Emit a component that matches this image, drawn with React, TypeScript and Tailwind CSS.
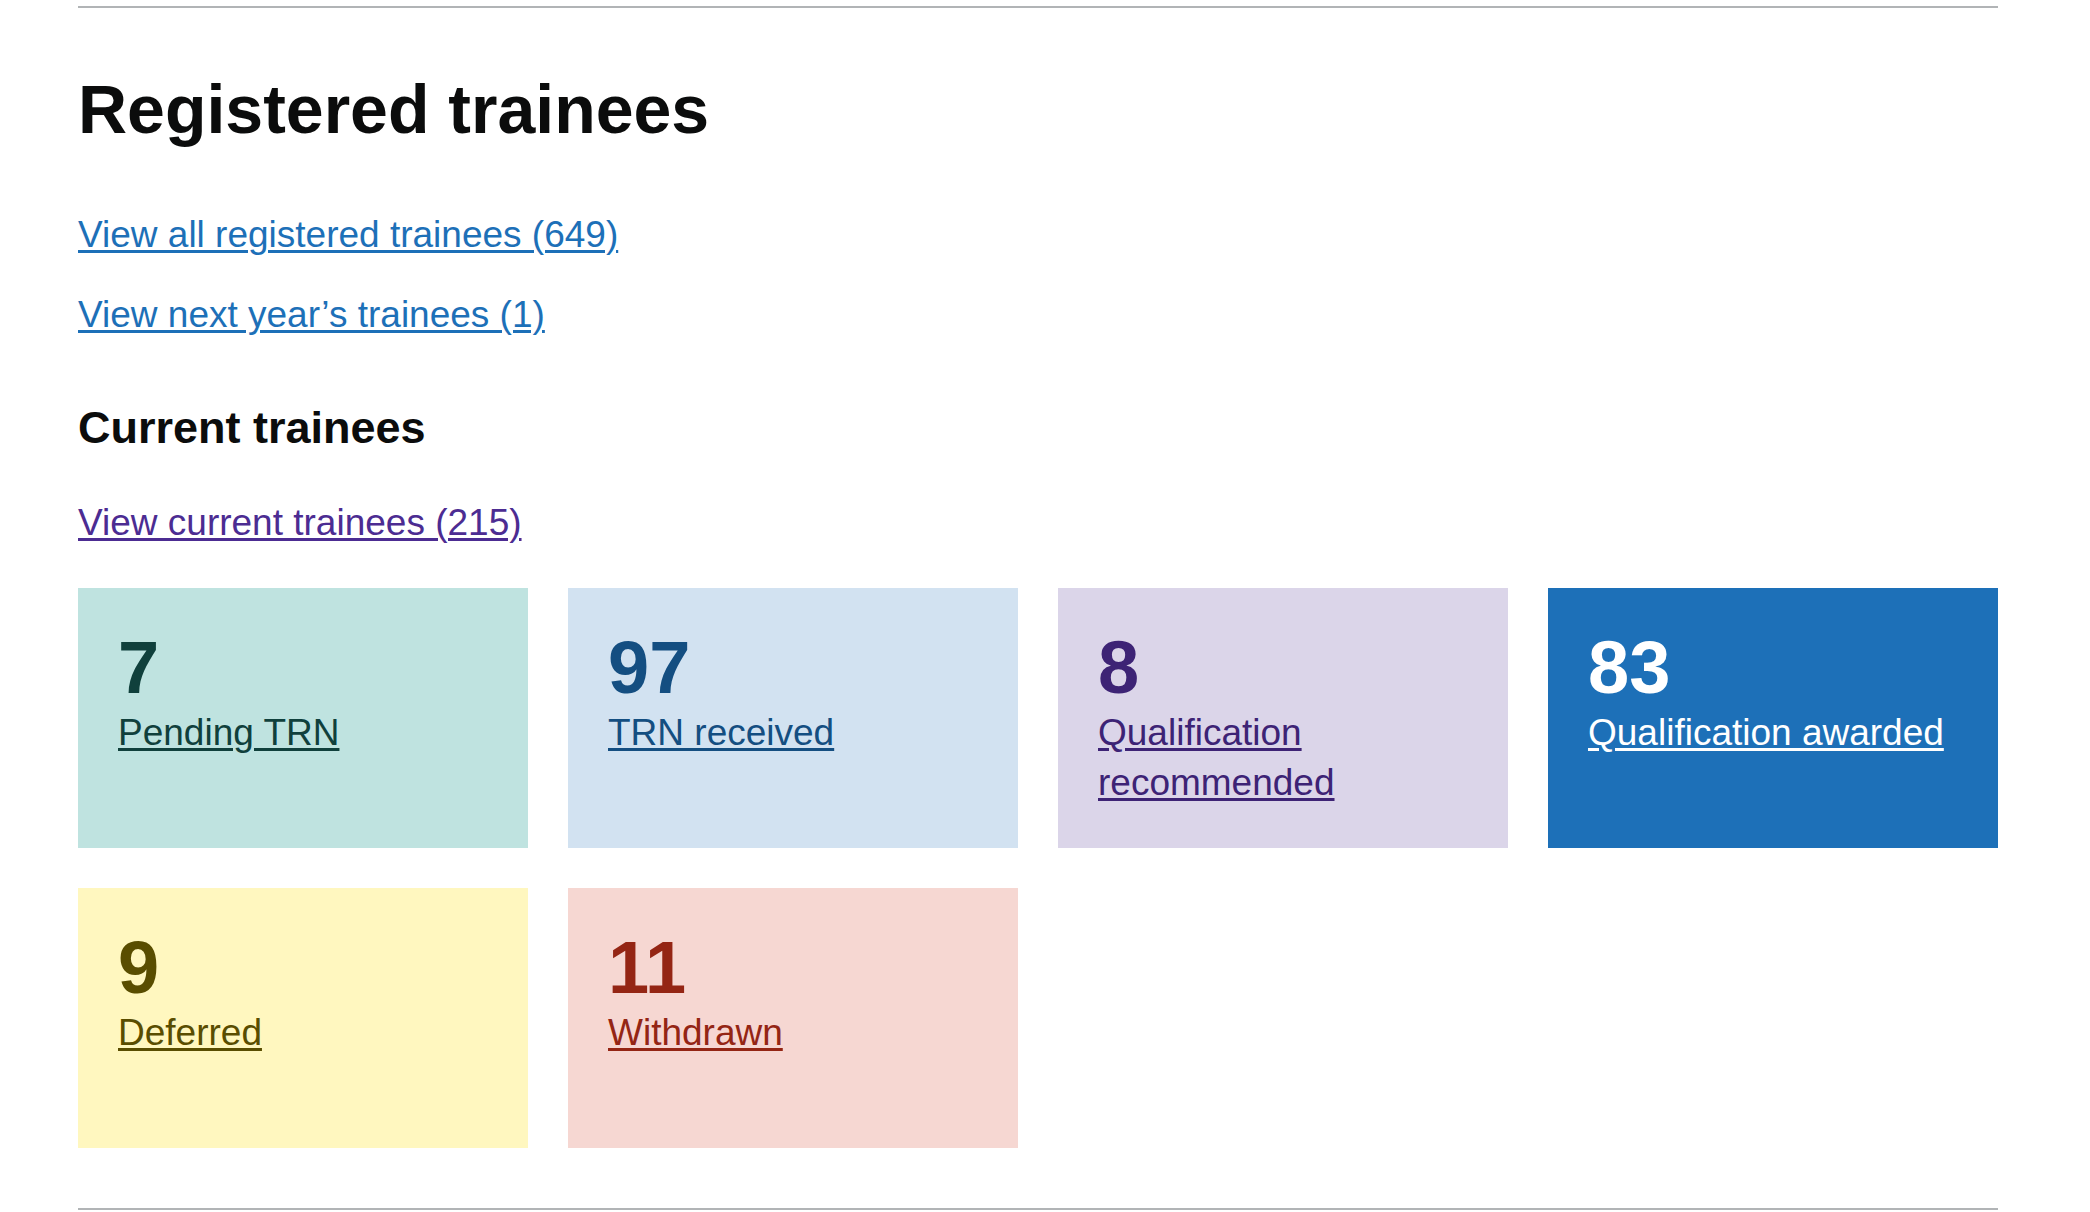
const cards = [
    { count: 7, label: "Pending TRN", box: "bg-[#bfe3e0] text-[#10403c]" },
    { count: 97, label: "TRN received", box: "bg-[#d2e2f1] text-[#144e81]" },
    { count: 8, label: "Qualification recommended", box: "bg-[#dbd5e9] text-[#3d2375]" },
    { count: 83, label: "Qualification awarded", box: "bg-[#1d70b8] text-white" },
    { count: 9, label: "Deferred", box: "bg-[#fff7bf] text-[#594d00]" },
    { count: 11, label: "Withdrawn", box: "bg-[#f6d7d2] text-[#942514]" },
];

const linkStyle =
    "underline decoration-[length:3px] underline-offset-[3px] hover:decoration-[length:4px]";

export default function App() {
    return (
        <div className="min-h-screen bg-white font-['Liberation_Sans',Arial,sans-serif] text-[#0b0c0c]">
            <div className="ml-[78px] w-[1920px] pt-[6px]">
                <hr className="h-[2px] border-0 bg-[#b1b4b6]" />

                <h1 className="mt-[61px] text-[68px] font-bold leading-[80px]">
                    Registered trainees
                </h1>

                <p className="mt-[61px] text-[37px] leading-[50px]">
                    <a href="#" className={`text-[#1d70b8] ${linkStyle}`}>
                        View all registered trainees (649)
                    </a>
                </p>
                <p className="mt-[30px] text-[37px] leading-[50px]">
                    <a href="#" className={`text-[#1d70b8] ${linkStyle}`}>
                        View next year’s trainees (1)
                    </a>
                </p>

                <h2 className="mt-[58px] text-[45px] font-bold leading-[60px]">
                    Current trainees
                </h2>

                <p className="mt-[40px] text-[37px] leading-[50px]">
                    <a href="#" className={`text-[#4c2c92] ${linkStyle}`}>
                        View current trainees (215)
                    </a>
                </p>

                {/* status cards */}
                <div className="mt-[40px] grid grid-cols-4 gap-[40px]">
                    {cards.map((card) => (
                        <div
                            key={card.label}
                            className={`h-[260px] px-[40px] pt-[40px] ${card.box}`}
                        >
                            <div className="text-[74px] font-bold leading-[80px]">
                                {card.count}
                            </div>
                            <a
                                href="#"
                                className={`text-[37px] leading-[50px] ${linkStyle}`}
                            >
                                {card.label}
                            </a>
                        </div>
                    ))}
                </div>

                <hr className="mt-[60px] h-[2px] border-0 bg-[#b1b4b6]" />
            </div>
        </div>
    );
}
